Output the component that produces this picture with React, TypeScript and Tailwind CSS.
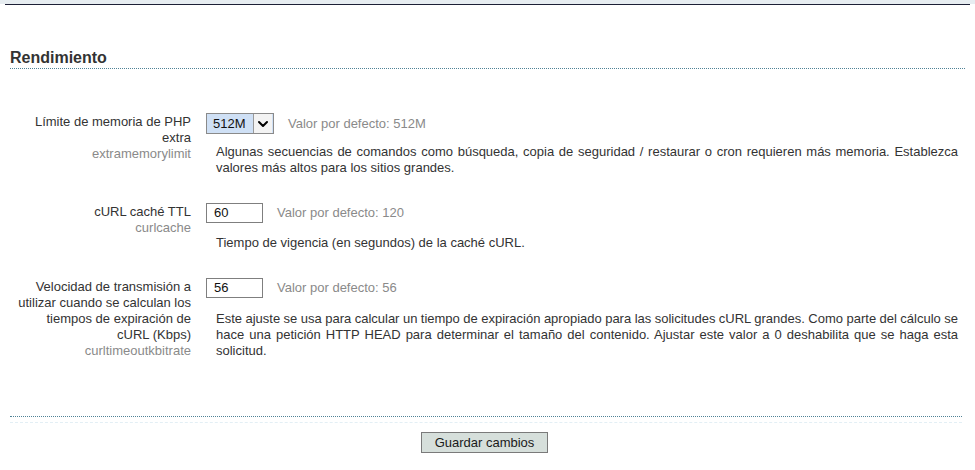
import { ChevronDown } from 'lucide-react';

const LABEL = 'w-[181px] shrink-0 text-right text-[13px] leading-4 text-[#333]';
const HINT = 'text-[13px] leading-4 text-[#8a8a8a]';
const DESC = 'ml-[10px] text-[13px] leading-4 text-[#333]';

// each line but the last is stretched to the full width, as the justified text in the screenshot
function Justified({ lines }: { lines: string[] }) {
  return (
    <>
      {lines.map((line, i) => (
        <span
          key={i}
          className={
            i < lines.length - 1
              ? 'block text-justify [text-align-last:justify] [word-spacing:-2px]'
              : 'block'
          }
        >
          {line}
        </span>
      ))}
    </>
  );
}

function TextBox({ value }: { value: string }) {
  return (
    <div className="flex h-[20px] w-[57px] items-center border border-[#7f7f7f] bg-white pl-[7px] text-[13px] text-[#111]">
      {value}
    </div>
  );
}

export default function App() {
  return (
    <div className="h-[470px] w-[975px] overflow-hidden bg-white font-['Liberation_Sans',Arial,sans-serif]">
      {/* top frame */}
      <div className="h-1 bg-[#e7edf1]" />
      <div className="mx-[5px] h-px bg-[#1d2036]" />

      <div className="pl-[10px] pr-[10px] pt-[43px]">
        <h2 className="border-b border-dotted border-[#4f8296] text-[16px] font-bold leading-5 text-[#333]">
          Rendimiento
        </h2>

        {/* extramemorylimit */}
        <div className="mt-[44px] flex items-start gap-[15px]">
          <div className={`${LABEL} pt-px`}>
            <div>
              Límite de memoria de PHP
              <br />
              extra
            </div>
            <div className="text-[#8a8a8a]">extramemorylimit</div>
          </div>
          <div className="flex-1 pr-[7px]">
            <div className="flex items-center gap-[14px]">
              <div className="flex h-[21px] w-[68px] items-center border border-[#8a8a8a] bg-[#cfe0f5]">
                <span className="flex-1 pl-[6px] text-[13px] text-[#111]">512M</span>
                <span className="mr-px flex h-[19px] w-[19px] items-center justify-center border-l border-[#9a9a9a] bg-[#f3f3f3]">
                  <ChevronDown className="h-[16px] w-[16px] text-black" strokeWidth={3} />
                </span>
              </div>
              <span className={HINT}>Valor por defecto: 512M</span>
            </div>
            <p className={`${DESC} mt-[10px]`}>
              <Justified
                lines={[
                  'Algunas secuencias de comandos como búsqueda, copia de seguridad / restaurar o cron requieren más memoria. Establezca',
                  'valores más altos para los sitios grandes.',
                ]}
              />
            </p>
          </div>
        </div>

        {/* curlcache */}
        <div className="mt-[27px] flex items-start gap-[15px]">
          <div className={`${LABEL} pt-px`}>
            <div>cURL caché TTL</div>
            <div className="text-[#8a8a8a]">curlcache</div>
          </div>
          <div className="flex-1 pr-[7px]">
            <div className="flex items-center gap-[14px]">
              <TextBox value="60" />
              <span className={HINT}>Valor por defecto: 120</span>
            </div>
            <p className={`${DESC} mt-[12px]`}>Tiempo de vigencia (en segundos) de la caché cURL.</p>
          </div>
        </div>

        {/* curltimeoutkbitrate */}
        <div className="mt-[27px] flex items-start gap-[15px]">
          <div className={`${LABEL} pt-px`}>
            <div>
              Velocidad de transmisión a
              <br />
              utilizar cuando se calculan los
              <br />
              tiempos de expiración de
              <br />
              cURL (Kbps)
            </div>
            <div className="text-[#8a8a8a]">curltimeoutkbitrate</div>
          </div>
          <div className="flex-1 pr-[7px]">
            <div className="flex items-center gap-[14px]">
              <TextBox value="56" />
              <span className={HINT}>Valor por defecto: 56</span>
            </div>
            <p className={`${DESC} mt-[13px]`}>
              <Justified
                lines={[
                  'Este ajuste se usa para calcular un tiempo de expiración apropiado para las solicitudes cURL grandes. Como parte del cálculo se',
                  'hace una petición HTTP HEAD para determinar el tamaño del contenido. Ajustar este valor a 0 deshabilita que se haga esta',
                  'solicitud.',
                ]}
              />
            </p>
          </div>
        </div>

        {/* form footer */}
        <div className="mr-[3px] mt-[57px] border-t border-dotted border-[#4f8296]" />
        <div className="mr-[3px] mt-[5px] border-t border-dashed border-[#e3eff5]" />
        <div className="mt-[9px] flex justify-center pr-[6px]">
          <button className="h-[21px] w-[127px] border border-[#7a7a7a] bg-[#d6dfdb] text-[13px] leading-none text-[#1a1a1a]">
            Guardar cambios
          </button>
        </div>
      </div>
    </div>
  );
}
